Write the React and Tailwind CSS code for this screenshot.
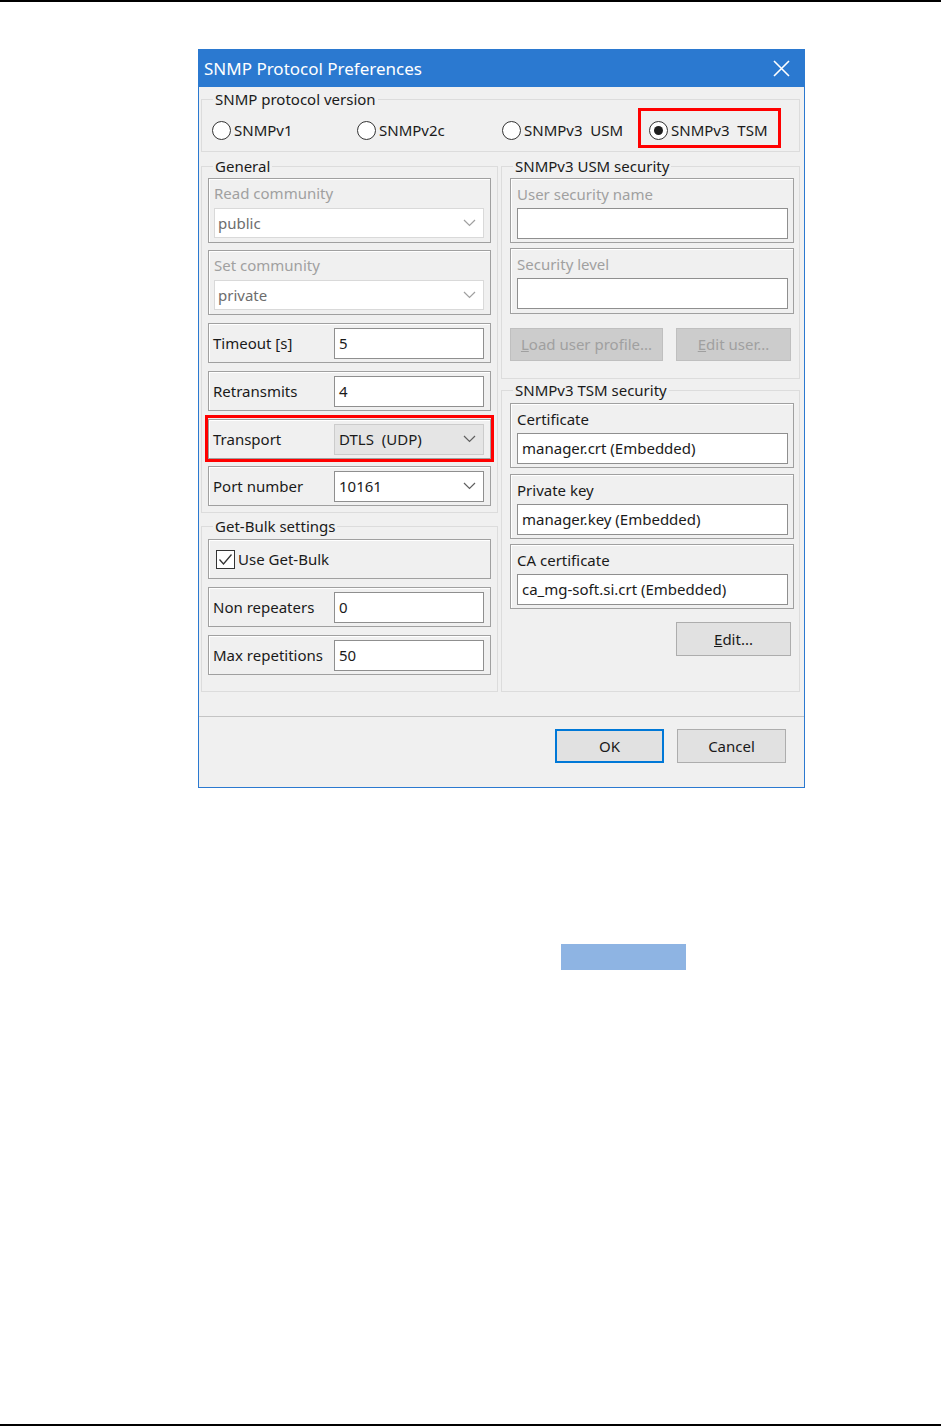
import React from "react";

const Chevron = ({ color = "#606060" }) => (
  <svg width="13" height="8" viewBox="0 0 13 8" fill="none">
    <polyline points="1,1 6.5,6.5 12,1" stroke={color} strokeWidth="1.2" />
  </svg>
);

const GroupBox = ({ title, legendClass = "ml-[11px]", className = "", children }) => (
  <fieldset className={`border border-[#dcdcdc] ${className}`}>
    <legend className={`px-[2px] h-[18px] leading-[18px] text-[#1a1a1a] ${legendClass}`}>{title}</legend>
    {children}
  </fieldset>
);

// etched inner frame
const Panel = ({ className = "", children }) => (
  <div className={`border border-[#a0a0a0] shadow-[inset_1px_1px_0_#ffffff] ${className}`}>{children}</div>
);

const TextBox = ({ value, className = "" }) => (
  <div className={`h-[31px] bg-white border border-[#8f8f8f] flex items-center pl-[4px] text-[#1a1a1a] ${className}`}>
    {value}
  </div>
);

const Radio = ({ label, checked, className = "" }) => (
  <div className={`flex items-center gap-[3px] ${className}`}>
    <span className="w-[19px] h-[19px] rounded-full border border-[#333] bg-white flex items-center justify-center">
      {checked && <span className="w-[9px] h-[9px] rounded-full bg-[#1f1f1f]" />}
    </span>
    <span className="text-[#1a1a1a]">{label}</span>
  </div>
);

const Button = ({ label, disabled, primary, className = "" }) => {
  let look = "bg-[#e1e1e1] border border-[#adadad] text-[#1a1a1a]";
  if (disabled) look = "bg-[#cccccc] border border-[#bfbfbf] text-[#a0a0a0]";
  if (primary) look = "bg-[#e1e1e1] border-2 border-[#0078d7] text-[#1a1a1a]";
  return <div className={`flex items-center justify-center ${look} ${className}`}>{label}</div>;
};

const ComboPanel = ({ label, value, className = "" }) => (
  <Panel className={`h-[65px] pl-[5px] pr-[6px] pt-[5px] ${className}`}>
    <div className="h-[18px] leading-[18px] text-[#a0a0a0]">{label}</div>
    <div className="mt-[6px] h-[30px] bg-white border border-[#d9d9d9] flex items-center justify-between pl-[3px] pr-[7px] text-[#6d6d6d]">
      <span>{value}</span>
      <Chevron color="#a0a0a0" />
    </div>
  </Panel>
);

const RowPanel = ({ label, children, className = "" }) => (
  <Panel className={`h-[40px] flex items-center pl-[4px] pr-[6px] ${className}`}>
    <span className="w-[121px] shrink-0 text-[#1a1a1a]">{label}</span>
    <div className="flex-1">{children}</div>
  </Panel>
);

const FieldPanel = ({ label, value, muted, className = "" }) => (
  <Panel className={`pl-[6px] pr-[5px] pt-[6px] ${className}`}>
    <div className={`h-[18px] leading-[18px] ${muted ? "text-[#a0a0a0]" : "text-[#1a1a1a]"}`}>{label}</div>
    <TextBox value={value} className="mt-[5px] pl-[3px]" />
  </Panel>
);

export default function App() {
  return (
    <div className="w-[941px] h-[1426px] bg-white flex flex-col font-['Noto_Sans',sans-serif] text-[15px]">
      <div className="h-[2px] bg-black" />

      {/* dialog */}
      <div className="ml-[198px] mt-[47px] w-[607px] h-[739px] border border-[#2b79d0] bg-[#f0f0f0] flex flex-col">
        <div className="h-[37px] bg-[#2b79d0] flex items-center justify-between pl-[5px] pr-[14px]">
          <span className="text-white text-[17px]">SNMP Protocol Preferences</span>
          <svg width="17" height="17" viewBox="0 0 17 17">
            <path d="M1 1 L16 16 M16 1 L1 16" stroke="#ffffff" strokeWidth="1.6" />
          </svg>
        </div>

        <div className="h-[629px] pl-[2px] pr-[4px]">
          <GroupBox title="SNMP protocol version" className="mt-[3px] h-[62px]">
            <div className="mt-[12px] h-[20px] flex items-center pl-[10px]">
              <Radio label="SNMPv1" className="w-[145px]" />
              <Radio label="SNMPv2c" className="w-[145px]" />
              <Radio label="SNMPv3  USM" className="w-[147px] whitespace-pre" />
              <div className="relative">
                <Radio label="SNMPv3  TSM" checked className="whitespace-pre" />
                <div className="absolute -left-[11px] -top-[11px] w-[143px] h-[40px] border-[3px] border-[#ff0000]" />
              </div>
            </div>
          </GroupBox>

          <div className="mt-[5px] flex gap-[3px]">
            {/* left column */}
            <div className="w-[297px] flex flex-col">
              <GroupBox title="General" legendClass="ml-[5px]" className="h-[356px] px-[6px]">
                <ComboPanel label="Read community" value="public" className="mt-[3px]" />
                <ComboPanel label="Set community" value="private" className="mt-[7px] h-[64px]" />
                <RowPanel label="Timeout [s]" className="mt-[8px]">
                  <TextBox value="5" />
                </RowPanel>
                <RowPanel label="Retransmits" className="mt-[8px]">
                  <TextBox value="4" />
                </RowPanel>
                <div className="relative mt-[8px]">
                  <RowPanel label="Transport">
                    <div className="h-[31px] bg-[#e5e5e5] border border-[#cccccc] flex items-center justify-between pl-[4px] pr-[7px] text-[#1a1a1a]">
                      <span className="whitespace-pre">DTLS  (UDP)</span>
                      <Chevron />
                    </div>
                  </RowPanel>
                  <div className="absolute -left-[3px] -top-[4px] w-[289px] h-[47px] border-[3px] border-[#ff0000]" />
                </div>
                <RowPanel label="Port number" className="mt-[7px]">
                  <div className="h-[31px] bg-white border border-[#8f8f8f] flex items-center justify-between pl-[4px] pr-[7px] text-[#1a1a1a]">
                    <span>10161</span>
                    <Chevron />
                  </div>
                </RowPanel>
              </GroupBox>

              <GroupBox title="Get-Bulk settings" legendClass="ml-[5px]" className="mt-[4px] h-[175px] px-[6px]">
                <Panel className="mt-[4px] h-[40px] flex items-center pl-[7px]">
                  <span className="w-[19px] h-[19px] border border-[#333] bg-white flex items-center justify-center">
                    <svg width="15" height="13" viewBox="0 0 15 13" fill="none">
                      <polyline points="1.5,6.5 5.5,11 13.5,1.5" stroke="#333" strokeWidth="1.3" />
                    </svg>
                  </span>
                  <span className="ml-[3px] text-[#1a1a1a]">Use Get-Bulk</span>
                </Panel>
                <RowPanel label="Non repeaters" className="mt-[8px]">
                  <TextBox value="0" />
                </RowPanel>
                <RowPanel label="Max repetitions" className="mt-[8px]">
                  <TextBox value="50" />
                </RowPanel>
              </GroupBox>
            </div>

            {/* right column */}
            <div className="w-[299px] flex flex-col">
              <GroupBox title="SNMPv3 USM security" legendClass="ml-[3px]" className="h-[222px] pl-[8px] pr-[5px]">
                <FieldPanel label="User security name" value="" muted className="mt-[3px] h-[65px]" />
                <FieldPanel label="Security level" value="" muted className="mt-[5px] h-[66px]" />
                <div className="mt-[14px] flex gap-[13px]">
                  <Button label={<span><u>L</u>oad user profile...</span>} disabled className="w-[153px] h-[33px]" />
                  <Button label={<span><u>E</u>dit user...</span>} disabled className="w-[115px] h-[33px]" />
                </div>
              </GroupBox>

              <GroupBox title="SNMPv3 TSM security" legendClass="ml-[3px]" className="mt-[2px] h-[311px] pl-[8px] pr-[5px]">
                <FieldPanel label="Certificate" value="manager.crt (Embedded)" className="mt-[4px] h-[65px]" />
                <FieldPanel label="Private key" value="manager.key (Embedded)" className="mt-[6px] h-[65px]" />
                <FieldPanel label="CA certificate" value="ca_mg-soft.si.crt (Embedded)" className="mt-[5px] h-[65px]" />
                <div className="mt-[13px] flex justify-end pr-[3px]">
                  <Button label={<span><u>E</u>dit...</span>} className="w-[115px] h-[34px]" />
                </div>
              </GroupBox>
            </div>
          </div>
        </div>

        <div className="h-px bg-[#c4c4c4]" />
        <div className="flex-1 flex justify-end gap-[13px] pt-[12px] pr-[18px]">
          <Button label="OK" primary className="w-[109px] h-[34px]" />
          <Button label="Cancel" className="w-[109px] h-[34px]" />
        </div>
      </div>

      <div className="ml-[561px] mt-[156px] w-[125px] h-[26px] bg-[#8eb4e3]" />

      <div className="flex-1" />
      <div className="h-[2px] bg-black" />
    </div>
  );
}
